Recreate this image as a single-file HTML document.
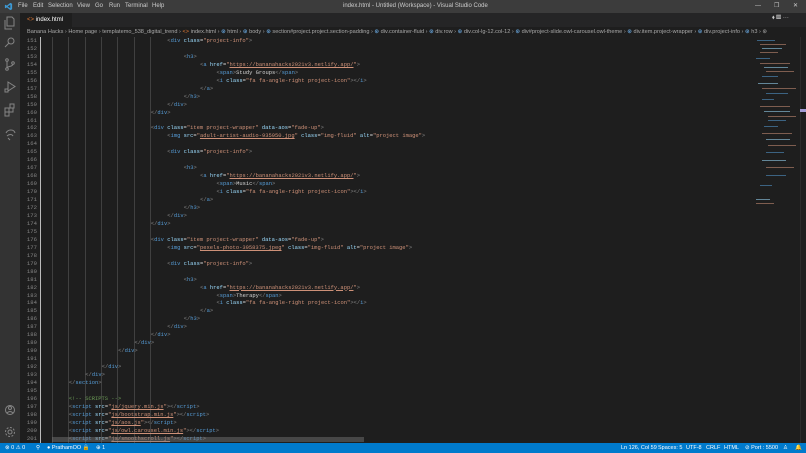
<!DOCTYPE html>
<html><head><meta charset="utf-8"><style>
*{margin:0;padding:0;box-sizing:border-box}
body{width:806px;height:453px;overflow:hidden;background:#1e1e1e;font-family:"Liberation Sans",sans-serif;position:relative}
.title{position:absolute;left:0;top:0;width:806px;height:13px;background:#3c3c3c;color:#ccc;font-size:6px;line-height:13px}
.title span{position:absolute;top:0}
.act{position:absolute;left:0;top:13px;width:20px;height:430px;background:#333}
.tabs{position:absolute;left:20px;top:13px;width:786px;height:14px;background:#252526}
.tab{position:absolute;left:0;top:0;width:52px;height:14px;background:#1e1e1e;color:#fff;font-size:6px;line-height:14px;padding-left:7px}
.bc{position:absolute;left:20px;top:27px;width:786px;height:10px;background:#1e1e1e;color:#a9a9a9;font-size:5.6px;line-height:10px;padding-left:7px;white-space:nowrap;overflow:hidden}
.gut{position:absolute;left:20px;top:37px;width:20px;height:406px;background:#1e1e1e}
.code{position:absolute;left:52.5px;top:37px;font-family:"Liberation Mono",monospace;font-size:5.45px;line-height:7.96px;color:#d4d4d4;white-space:normal}
.code div{height:7.96px;white-space:pre}
.l1{padding-left:16.4px}.l2{padding-left:32.8px}.l3{padding-left:49.2px}.l4{padding-left:65.6px}.l5{padding-left:82px}.l6{padding-left:98.4px}.l7{padding-left:114.8px}.l8{padding-left:131.2px}.l9{padding-left:147.6px}.l10{padding-left:164px}
.t{color:#569cd6}.p{color:#808080}.a{color:#9cdcfe}.s{color:#ce9178}.u{color:#ce9178;text-decoration:underline}.c{color:#6a9955}
.g{position:absolute;top:37px;width:1px;height:406px;background:#404040}
.status{position:absolute;left:0;top:443px;width:806px;height:10px;background:#007acc;color:#fff;font-size:5.5px;line-height:10px}
.status span{position:absolute;top:0}
.mm{position:absolute;height:1px;opacity:.55}
</style></head><body>
<div class="title">
<svg style="position:absolute;left:4px;top:2px" width="9" height="9" viewBox="0 0 10 10"><path d="M7 1 L9 2 V8 L7 9 L2 5 Z M7 3 L4 5 L7 7Z" fill="#3c99d4"/><path d="M1 3.5 L2 3 L4 5 L2 7 L1 6.5 Z" fill="#3c99d4"/></svg>
<span style="left:18px">File</span><span style="left:33px">Edit</span><span style="left:48px">Selection</span><span style="left:77px">View</span><span style="left:95px">Go</span><span style="left:109px">Run</span><span style="left:125px">Terminal</span><span style="left:152px">Help</span>
<span style="left:343px">index.html - Untitled (Workspace) - Visual Studio Code</span>
<span style="left:755px">—</span><span style="left:774px">❐</span><span style="left:793px">✕</span>
</div>
<div class="act">
<svg width="20" height="430" viewBox="0 0 20 430" fill="none" stroke="#858585" stroke-width="1">
<path d="M7 4h5l2 2v7h-7z M5 7v9h7"/>
<circle cx="11" cy="28" r="3"/><path d="M9 30l-4 4"/>
<circle cx="7" cy="47" r="1.3"/><circle cx="7" cy="56" r="1.3"/><circle cx="13" cy="50" r="1.3"/><path d="M7 48v7 M13 51c0 3-6 2-6 4"/>
<path d="M8 69v9l7-4.5z"/><rect x="5" y="76" width="3" height="3"/>
<rect x="5" y="95" width="4" height="4"/><rect x="9" y="95" width="4" height="4"/><rect x="5" y="99" width="4" height="4"/><rect x="10" y="91" width="4" height="4"/>
<path d="M6 120c2-4 8-4 9 0 M7 123c2-2 5-2 6 0 M8 125l2 2"/>
<circle cx="10" cy="397" r="4.5"/><circle cx="10" cy="395" r="1.5"/><path d="M7 400c2-2 4-2 6 0"/>
<circle cx="10" cy="419" r="2"/><circle cx="10" cy="419" r="4.5" stroke-dasharray="2 1.5"/>
</svg>
</div>
<div class="tabs"><div class="tab"><span style="color:#e37933">&lt;&gt;</span> index.html <span style="margin-left:3px">✕</span></div>
<span style="position:absolute;left:752px;top:2px;color:#ccc;font-size:6px">⬧ ▥ ···</span></div>
<div class="bc">Banana Hacks › Home page › templatemo_538_digital_trend › <span style="color:#e37933">&lt;&gt;</span> index.html › <span style="color:#75beff">⊛</span> html › <span style="color:#75beff">⊛</span> body › <span style="color:#75beff">⊛</span> section#project.project.section-padding › <span style="color:#75beff">⊛</span> div.container-fluid › <span style="color:#75beff">⊛</span> div.row › <span style="color:#75beff">⊛</span> div.col-lg-12.col-12 › <span style="color:#75beff">⊛</span> div#project-slide.owl-carousel.owl-theme › <span style="color:#75beff">⊛</span> div.item.project-wrapper › <span style="color:#75beff">⊛</span> div.project-info › <span style="color:#75beff">⊛</span> h3 › ⊛</div>
<div class="gut"></div>
<div style="position:absolute;left:40px;top:37px;width:1px;height:406px;background:#bbb"></div>
<div class="g" style="left:52px"></div><div class="g" style="left:68px"></div><div class="g" style="left:85px"></div><div class="g" style="left:101px"></div><div class="g" style="left:117px"></div><div class="g" style="left:134px"></div><div class="g" style="left:150px"></div>
<div style="position:absolute;left:20px;top:37px;width:20px;font-family:'Liberation Mono',monospace;font-size:5.6px;line-height:7.96px;color:#858585;text-align:right;padding-right:3px">151<br>152<br>153<br>154<br>155<br>156<br>157<br>158<br>159<br>160<br>161<br>162<br>163<br>164<br>165<br>166<br>167<br>168<br>169<br>170<br>171<br>172<br>173<br>174<br>175<br>176<br>177<br>178<br>179<br>180<br>181<br>182<br>183<br>184<br>185<br>186<br>187<br>188<br>189<br>190<br>191<br>192<br>193<br>194<br>195<br>196<br>197<br>198<br>199<br>200<br>201</div>
<div class="code">
<div class="l7"><span class="p">&lt;</span><span class="t">div</span> <span class="a">class</span>=<span class="s">"project-info"</span><span class="p">&gt;</span></div>
<div> </div>
<div class="l8"><span class="p">&lt;</span><span class="t">h3</span><span class="p">&gt;</span></div>
<div class="l9"><span class="p">&lt;</span><span class="t">a</span> <span class="a">href</span>=<span class="s">"</span><span class="u">https://bananahacks2021v3.netlify.app/</span><span class="s">"</span><span class="p">&gt;</span></div>
<div class="l10"><span class="p">&lt;</span><span class="t">span</span><span class="p">&gt;</span>Study Groups<span class="p">&lt;/</span><span class="t">span</span><span class="p">&gt;</span></div>
<div class="l10"><span class="p">&lt;</span><span class="t">i</span> <span class="a">class</span>=<span class="s">"fa fa-angle-right project-icon"</span><span class="p">&gt;&lt;/</span><span class="t">i</span><span class="p">&gt;</span></div>
<div class="l9"><span class="p">&lt;/</span><span class="t">a</span><span class="p">&gt;</span></div>
<div class="l8"><span class="p">&lt;/</span><span class="t">h3</span><span class="p">&gt;</span></div>
<div class="l7"><span class="p">&lt;/</span><span class="t">div</span><span class="p">&gt;</span></div>
<div class="l6"><span class="p">&lt;/</span><span class="t">div</span><span class="p">&gt;</span></div>
<div> </div>
<div class="l6"><span class="p">&lt;</span><span class="t">div</span> <span class="a">class</span>=<span class="s">"item project-wrapper"</span> <span class="a">data-aos</span>=<span class="s">"fade-up"</span><span class="p">&gt;</span></div>
<div class="l7"><span class="p">&lt;</span><span class="t">img</span> <span class="a">src</span>=<span class="s">"</span><span class="u">adult-artist-audio-935950.jpg</span><span class="s">"</span> <span class="a">class</span>=<span class="s">"img-fluid"</span> <span class="a">alt</span>=<span class="s">"project image"</span><span class="p">&gt;</span></div>
<div> </div>
<div class="l7"><span class="p">&lt;</span><span class="t">div</span> <span class="a">class</span>=<span class="s">"project-info"</span><span class="p">&gt;</span></div>
<div> </div>
<div class="l8"><span class="p">&lt;</span><span class="t">h3</span><span class="p">&gt;</span></div>
<div class="l9"><span class="p">&lt;</span><span class="t">a</span> <span class="a">href</span>=<span class="s">"</span><span class="u">https://bananahacks2021v3.netlify.app/</span><span class="s">"</span><span class="p">&gt;</span></div>
<div class="l10"><span class="p">&lt;</span><span class="t">span</span><span class="p">&gt;</span>Music<span class="p">&lt;/</span><span class="t">span</span><span class="p">&gt;</span></div>
<div class="l10"><span class="p">&lt;</span><span class="t">i</span> <span class="a">class</span>=<span class="s">"fa fa-angle-right project-icon"</span><span class="p">&gt;&lt;/</span><span class="t">i</span><span class="p">&gt;</span></div>
<div class="l9"><span class="p">&lt;/</span><span class="t">a</span><span class="p">&gt;</span></div>
<div class="l8"><span class="p">&lt;/</span><span class="t">h3</span><span class="p">&gt;</span></div>
<div class="l7"><span class="p">&lt;/</span><span class="t">div</span><span class="p">&gt;</span></div>
<div class="l6"><span class="p">&lt;/</span><span class="t">div</span><span class="p">&gt;</span></div>
<div> </div>
<div class="l6"><span class="p">&lt;</span><span class="t">div</span> <span class="a">class</span>=<span class="s">"item project-wrapper"</span> <span class="a">data-aos</span>=<span class="s">"fade-up"</span><span class="p">&gt;</span></div>
<div class="l7"><span class="p">&lt;</span><span class="t">img</span> <span class="a">src</span>=<span class="s">"</span><span class="u">pexels-photo-3958375.jpeg</span><span class="s">"</span> <span class="a">class</span>=<span class="s">"img-fluid"</span> <span class="a">alt</span>=<span class="s">"project image"</span><span class="p">&gt;</span></div>
<div> </div>
<div class="l7"><span class="p">&lt;</span><span class="t">div</span> <span class="a">class</span>=<span class="s">"project-info"</span><span class="p">&gt;</span></div>
<div> </div>
<div class="l8"><span class="p">&lt;</span><span class="t">h3</span><span class="p">&gt;</span></div>
<div class="l9"><span class="p">&lt;</span><span class="t">a</span> <span class="a">href</span>=<span class="s">"</span><span class="u">https://bananahacks2021v3.netlify.app/</span><span class="s">"</span><span class="p">&gt;</span></div>
<div class="l10"><span class="p">&lt;</span><span class="t">span</span><span class="p">&gt;</span>Therapy<span class="p">&lt;/</span><span class="t">span</span><span class="p">&gt;</span></div>
<div class="l10"><span class="p">&lt;</span><span class="t">i</span> <span class="a">class</span>=<span class="s">"fa fa-angle-right project-icon"</span><span class="p">&gt;&lt;/</span><span class="t">i</span><span class="p">&gt;</span></div>
<div class="l9"><span class="p">&lt;/</span><span class="t">a</span><span class="p">&gt;</span></div>
<div class="l8"><span class="p">&lt;/</span><span class="t">h3</span><span class="p">&gt;</span></div>
<div class="l7"><span class="p">&lt;/</span><span class="t">div</span><span class="p">&gt;</span></div>
<div class="l6"><span class="p">&lt;/</span><span class="t">div</span><span class="p">&gt;</span></div>
<div class="l5"><span class="p">&lt;/</span><span class="t">div</span><span class="p">&gt;</span></div>
<div class="l4"><span class="p">&lt;/</span><span class="t">div</span><span class="p">&gt;</span></div>
<div> </div>
<div class="l3"><span class="p">&lt;/</span><span class="t">div</span><span class="p">&gt;</span></div>
<div class="l2"><span class="p">&lt;/</span><span class="t">div</span><span class="p">&gt;</span></div>
<div class="l1"><span class="p">&lt;/</span><span class="t">section</span><span class="p">&gt;</span></div>
<div> </div>
<div class="l1"><span class="c">&lt;!-- SCRIPTS --&gt;</span></div>
<div class="l1"><span class="p">&lt;</span><span class="t">script</span> <span class="a">src</span>=<span class="s">"</span><span class="u">js/jquery.min.js</span><span class="s">"</span><span class="p">&gt;&lt;/</span><span class="t">script</span><span class="p">&gt;</span></div>
<div class="l1"><span class="p">&lt;</span><span class="t">script</span> <span class="a">src</span>=<span class="s">"</span><span class="u">js/bootstrap.min.js</span><span class="s">"</span><span class="p">&gt;&lt;/</span><span class="t">script</span><span class="p">&gt;</span></div>
<div class="l1"><span class="p">&lt;</span><span class="t">script</span> <span class="a">src</span>=<span class="s">"</span><span class="u">js/aos.js</span><span class="s">"</span><span class="p">&gt;&lt;/</span><span class="t">script</span><span class="p">&gt;</span></div>
<div class="l1"><span class="p">&lt;</span><span class="t">script</span> <span class="a">src</span>=<span class="s">"</span><span class="u">js/owl.carousel.min.js</span><span class="s">"</span><span class="p">&gt;&lt;/</span><span class="t">script</span><span class="p">&gt;</span></div>
<div class="l1"><span class="p">&lt;</span><span class="t">script</span> <span class="a">src</span>=<span class="s">"</span><span class="u">js/smoothscroll.js</span><span class="s">"</span><span class="p">&gt;&lt;/</span><span class="t">script</span><span class="p">&gt;</span></div>
</div>
<div style="position:absolute;left:52px;top:437px;width:312px;height:5px;background:rgba(121,121,121,.45)"></div>
<div style="position:absolute;left:753px;top:37px;width:47px;height:406px;background:#1e1e1e"></div>
<div style="position:absolute;left:800px;top:37px;width:1px;height:406px;background:#2b2b2b"></div>
<div style="position:absolute;left:800px;top:109px;width:6px;height:3px;background:#a29bd4"></div>
<div class="mm" style="left:757px;top:40px;width:18px;background:#569cd6"></div><div class="mm" style="left:760px;top:44px;width:26px;background:#ce9178"></div><div class="mm" style="left:762px;top:48px;width:20px;background:#9cdcfe"></div><div class="mm" style="left:760px;top:52px;width:18px;background:#ce9178"></div>
<div class="mm" style="left:756px;top:58px;width:14px;background:#569cd6"></div><div class="mm" style="left:760px;top:63px;width:30px;background:#ce9178"></div><div class="mm" style="left:764px;top:67px;width:24px;background:#9cdcfe"></div><div class="mm" style="left:766px;top:71px;width:28px;background:#ce9178"></div><div class="mm" style="left:762px;top:76px;width:16px;background:#569cd6"></div>
<div class="mm" style="left:758px;top:83px;width:20px;background:#9cdcfe"></div><div class="mm" style="left:762px;top:88px;width:34px;background:#ce9178"></div><div class="mm" style="left:766px;top:93px;width:22px;background:#569cd6"></div><div class="mm" style="left:762px;top:99px;width:12px;background:#569cd6"></div>
<div class="mm" style="left:760px;top:106px;width:30px;background:#ce9178"></div><div class="mm" style="left:764px;top:111px;width:26px;background:#9cdcfe"></div><div class="mm" style="left:768px;top:116px;width:28px;background:#ce9178"></div><div class="mm" style="left:768px;top:120px;width:18px;background:#569cd6"></div><div class="mm" style="left:764px;top:126px;width:14px;background:#569cd6"></div>
<div class="mm" style="left:762px;top:133px;width:30px;background:#ce9178"></div><div class="mm" style="left:766px;top:139px;width:24px;background:#9cdcfe"></div><div class="mm" style="left:768px;top:145px;width:28px;background:#ce9178"></div><div class="mm" style="left:766px;top:152px;width:18px;background:#569cd6"></div><div class="mm" style="left:762px;top:160px;width:24px;background:#9cdcfe"></div><div class="mm" style="left:766px;top:167px;width:28px;background:#ce9178"></div><div class="mm" style="left:766px;top:175px;width:20px;background:#569cd6"></div><div class="mm" style="left:760px;top:185px;width:12px;background:#569cd6"></div><div class="mm" style="left:756px;top:199px;width:14px;background:#9cdcfe"></div><div class="mm" style="left:756px;top:203px;width:18px;background:#ce9178"></div>
<div class="status">
<span style="left:5px">⊗ 0 ⚠ 0</span><span style="left:36px">⚲</span><span style="left:47px">● PrathamOO 🔒</span><span style="left:96px">⊕ 1</span>
<span style="left:621px">Ln 126, Col 59</span><span style="left:658px">Spaces: 5</span><span style="left:686px">UTF-8</span><span style="left:706px">CRLF</span><span style="left:724px">HTML</span><span style="left:745px">⊘ Port : 5500</span><span style="left:783px">♙</span><span style="left:795px">🔔</span>
</div>
</body></html>
